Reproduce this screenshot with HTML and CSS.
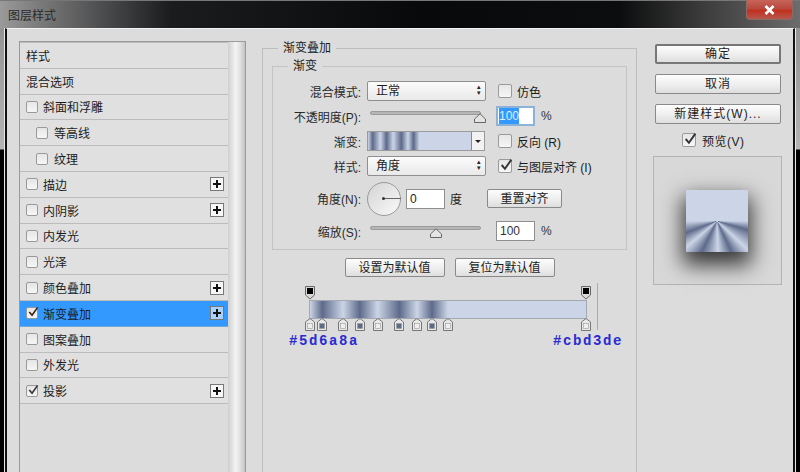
FILE: index.html
```html
<!DOCTYPE html>
<html lang="zh-CN">
<head>
    <meta charset="UTF-8">
    <title>图层样式</title>
    <link rel="stylesheet" href="styles.css">
</head>
<body>
    <svg class="defs" width="0" height="0">
        <symbol id="tick" viewBox="0 0 13 13"><path d="M2.5 6.5 5.5 10 11.5 1.5" fill="none" stroke="currentColor" stroke-width="1.8"/></symbol>
        <symbol id="thumb" viewBox="0 0 12 10"><path d="M.5 9.5V6L6 .8 11.500 6v3.500z" fill="#e4e4e4" stroke="#666"/></symbol>
        <symbol id="stop-low" viewBox="0 0 10 13"><path d="M.5 12.500V4L5 .5 9.500 4v8.500z" fill="#e8e8e8" stroke="#777"/><rect x="2.500" y="5.500" width="5" height="5" fill="currentColor" stroke="#999" stroke-width=".6"/></symbol>
        <symbol id="stop-high" viewBox="0 0 10 14"><path d="M.5 .5h9V9L5 13 .5 9z" fill="#d8d8d8" stroke="#666"/><rect x="2" y="2" width="6" height="6" fill="#000"/></symbol>
    </svg>

    <div class="window">
        <div class="titlebar">
            <span class="title">图层样式</span>
            <button class="close" aria-label="关闭">
                <svg width="11" height="10" viewBox="0 0 11 10"><path d="M1.500 1 9.500 9M9.500 1 1.500 9" stroke="#fff" stroke-width="2.600"/></svg>
            </button>
        </div>

        <div class="dialog">
            <div class="styles">
                <ul class="style-list">
                    <li class="row strong">样式</li>
                    <li class="row">混合选项</li>
                    <li class="row"><span class="check"></span>斜面和浮雕</li>
                    <li class="row sub"><span class="check"></span>等高线</li>
                    <li class="row sub"><span class="check"></span>纹理</li>
                    <li class="row"><span class="check"></span>描边<span class="plus"></span></li>
                    <li class="row"><span class="check"></span>内阴影<span class="plus"></span></li>
                    <li class="row"><span class="check"></span>内发光</li>
                    <li class="row"><span class="check"></span>光泽</li>
                    <li class="row"><span class="check"></span>颜色叠加<span class="plus"></span></li>
                    <li class="row active"><span class="check"><svg class="tick tick-dark"><use href="#tick"/></svg></span>渐变叠加<span class="plus"></span></li>
                    <li class="row"><span class="check"></span>图案叠加</li>
                    <li class="row"><span class="check"></span>外发光</li>
                    <li class="row"><span class="check"><svg class="tick"><use href="#tick"/></svg></span>投影<span class="plus"></span></li>
                </ul>
                <div class="scrollbar"></div>
            </div>

            <fieldset class="panel">
                <legend>渐变叠加</legend>
                <fieldset class="group">
                    <legend>渐变</legend>
                    <div class="form">
                        <label>混合模式:</label>
                        <div class="select">正常</div>
                        <div class="option"><span class="check"></span>仿色</div>

                        <label>不透明度(P):</label>
                        <div class="slider"><svg class="slider-thumb thumb-end"><use href="#thumb"/></svg></div>
                        <div class="amount"><span class="field field-focus"><span class="selected">100</span></span>%</div>

                        <label>渐变:</label>
                        <div class="gradient-pick"><div class="gradient-thumb"></div><div class="gradient-arrow"></div></div>
                        <div class="option"><span class="check"></span>反向 (R)</div>

                        <label>样式:</label>
                        <div class="select">角度</div>
                        <div class="option"><span class="check"><svg class="tick"><use href="#tick"/></svg></span>与图层对齐 (I)</div>

                        <label>角度(N):</label>
                        <div class="angle">
                            <div class="dial"><span class="dial-hand"></span></div>
                            <span class="field">0</span>
                            <span>度</span>
                            <button class="btn btn-align">重置对齐</button>
                        </div>

                        <label>缩放(S):</label>
                        <div class="slider"><svg class="slider-thumb thumb-mid"><use href="#thumb"/></svg></div>
                        <div class="amount"><span class="field">100</span>%</div>
                    </div>
                </fieldset>

                <div class="defaults">
                    <button class="btn btn-default">设置为默认值</button>
                    <button class="btn btn-default">复位为默认值</button>
                </div>

                <div class="editor">
                    <div class="ramp">
                        <svg class="stop-high" style="left:0"><use href="#stop-high"/></svg>
                        <svg class="stop-high" style="left:100%"><use href="#stop-high"/></svg>
                        <svg class="stop light" style="left:0"><use href="#stop-low"/></svg>
                        <svg class="stop dark" style="left:4.5%"><use href="#stop-low"/></svg>
                        <svg class="stop light" style="left:12%"><use href="#stop-low"/></svg>
                        <svg class="stop dark" style="left:18%"><use href="#stop-low"/></svg>
                        <svg class="stop light" style="left:24.500%"><use href="#stop-low"/></svg>
                        <svg class="stop dark" style="left:32.400%"><use href="#stop-low"/></svg>
                        <svg class="stop light" style="left:38.800%"><use href="#stop-low"/></svg>
                        <svg class="stop dark" style="left:44.200%"><use href="#stop-low"/></svg>
                        <svg class="stop light" style="left:50%"><use href="#stop-low"/></svg>
                        <svg class="stop light" style="left:100%"><use href="#stop-low"/></svg>
                    </div>
                    <div class="hex-row">
                        <span class="hex">#5d6a8a</span>
                        <span class="hex">#cbd3de</span>
                    </div>
                </div>
            </fieldset>

            <div class="actions">
                <button class="btn btn-action btn-primary">确定</button>
                <button class="btn btn-action">取消</button>
                <button class="btn btn-action">新建样式(W)...</button>
                <div class="preview-check"><span class="check check-big"><svg class="tick"><use href="#tick"/></svg></span>预览(V)</div>
                <div class="preview"><div class="swatch"></div></div>
            </div>
        </div>
    </div>
</body>
</html>
```

FILE: styles.css
```css
:root {
    --ramp: #ccd5e7 0%, #5d6a8a 4.5%, #ccd5e7 12%, #5d6a8a 18%, #ccd5e7 24.5%, #5d6a8a 32.4%, #ccd5e7 38.8%, #5d6a8a 44.2%, #ccd5e7 50%, #ccd5e7 100%;
}
* { box-sizing: border-box; }
html, body { margin: 0; padding: 0; }
body {
    font-family: "Liberation Sans", "Noto Sans CJK SC", sans-serif;
    font-size: 12px;
    color: #1c1c1c;
    width: 800px;
    height: 472px;
    overflow: hidden;
}
.defs { position: absolute; }
button { font: inherit; color: inherit; padding: 0; cursor: default; }

.window {
    width: 800px;
    height: 472px;
    display: flex;
    flex-direction: column;
    overflow: hidden;
    background: linear-gradient(#8c8c8c 0, #b4b4b4 149px, #000 150px);
}
.titlebar {
    flex: none;
    height: 28px;
    display: flex;
    align-items: flex-start;
    justify-content: space-between;
    padding: 7px 7px 0 8px;
    background: linear-gradient(90deg, #9a9a9a 0, #7a7a7a 40px, #1a1c1e 170px, #08090a 420px, #0c0d0e 620px, #3a3a3a 700px, #6c6c6c 800px);
    border-top: 1px solid #777;
}
.title { color: #2a2a2a; line-height: 16px; }
.close {
    margin-top: -8px;
    width: 47px;
    height: 20px;
    border: 1px solid #8d6a66;
    border-top: 0;
    border-radius: 0 0 4px 4px;
    background: linear-gradient(#c8645a 0, #b84a3e 45%, #c2301e 55%, #b4584e 100%);
    display: flex;
    align-items: center;
    justify-content: center;
}

.dialog {
    flex: 1;
    min-height: 0;
    margin: 0 5px;
    padding: 12px 0 0 12px;
    display: flex;
    align-items: flex-start;
    background: #dcdcdc;
    border-left: 2px solid #111;
    border-right: 2px solid #111;
    border-top: 1px solid #f2f2f2;
    box-shadow: -1px 0 0 #e8e8e8, 1px 0 0 #e8e8e8;
    overflow: hidden;
}

/* style list on the left */
.styles {
    flex: none;
    width: 227px;
    height: 440px;
    display: flex;
    border: 1px solid #9a9a9a;
    border-bottom: 0;
}
.style-list {
    list-style: none;
    margin: 0;
    padding: 0;
    flex: 1;
    border-top: 1px solid #bdbdbd;
}
.scrollbar {
    flex: none;
    width: 17px;
    background: linear-gradient(90deg, #cfcfcf, #f4f4f4 45%, #e2e2e2 70%, #c4c4c4);
}
.row {
    height: 25.8px;
    display: flex;
    align-items: center;
    padding: 0 4px 0 6px;
    border-bottom: 1px solid #bcbcbc;
    background: #e0e0e0;
}
.row .check { margin-right: 5px; }
.row.sub { padding-left: 16px; }
.row.sub .check { margin-right: 6px; }
.row.active { background: #3399ff; border-bottom-color: #6fa9dc; }
.check {
    flex: none;
    width: 12px;
    height: 12px;
    border: 1px solid #9a9a9a;
    border-radius: 2px;
    background: linear-gradient(#e6e6e6, #f6f6f6);
    position: relative;
}
.tick {
    position: absolute;
    left: 0;
    top: -2px;
    width: 12px;
    height: 12px;
    color: #333;
}
.tick-dark { color: #3a2410; }
.plus {
    width: 14px;
    height: 14px;
    margin-left: auto;
    border: 1px solid #777;
    background:
        linear-gradient(#111, #111) center / 8px 2px no-repeat,
        linear-gradient(#111, #111) center / 2px 8px no-repeat,
        #f6f6f6;
}
.active .plus { background-color: #a8d0f8; }

/* middle panel */
fieldset { margin: 0; min-width: 0; }
.panel {
    flex: none;
    width: 375px;
    height: 470px;
    margin: 0 0 0 16px;
    padding: 0 9px;
    border: 1px solid #bdbdbd;
}
.panel > legend { margin-left: 6px; padding: 0 5px; line-height: 14px; }
.group {
    height: 191px;
    margin-top: 4px;
    padding: 8px 0 0;
    border: 1px solid #c4c4c4;
}
.group > legend { margin-left: 15px; padding: 0 5px; line-height: 14px; }
.form {
    display: grid;
    grid-template-columns: 88px 119px 1fr;
    grid-template-rows: 20px 20px 20px 20px 35px 20px;
    column-gap: 6px;
    row-gap: 5px;
    align-items: center;
}
.form > label { text-align: right; color: #2a2a2a; }
.form > .amount, .form > .option { margin-left: 4px; }
.select {
    height: 20px;
    padding-left: 8px;
    line-height: 18px;
    border: 1px solid #8f8f8f;
    border-radius: 2px;
    background: linear-gradient(#fbfbfb, #e9e9e9);
    position: relative;
}
.select::after {
    content: "\25B4\A\25BE";
    white-space: pre;
    position: absolute;
    right: 4px;
    top: 2px;
    font-size: 7px;
    line-height: 6px;
    color: #222;
}
.option { display: flex; align-items: center; gap: 5px; }
.option .check { width: 14px; height: 14px; margin-left: 2px; }
.option .tick { width: 14px; height: 14px; }
.slider {
    height: 4px;
    margin: 0 5px 6px 3px;
    border-radius: 2px;
    border: 1px solid #9b9b9b;
    background: #b6b6b6;
    position: relative;
}
.slider-thumb { position: absolute; top: 1px; width: 12px; height: 10px; margin-left: -6px; }
.thumb-end { left: 100%; }
.thumb-mid { left: 60%; }
.amount { display: flex; align-items: center; gap: 6px; color: #333; }
.field {
    display: block;
    width: 39px;
    height: 20px;
    padding-left: 3px;
    line-height: 18px;
    background: #fff;
    border: 1px solid #8f8f8f;
}
.field-focus { border: 2px solid #8db2d8; padding-left: 1px; line-height: 16px; }
.selected { background: #3399ff; color: #dfefff; display: inline-block; }
.gradient-pick {
    height: 20px;
    display: flex;
    border: 1px solid #9a9a9a;
    margin-right: 1px;
}
.gradient-thumb { flex: 1; background: linear-gradient(90deg, var(--ramp)); }
.gradient-arrow {
    flex: none;
    width: 13px;
    border-left: 1px solid #888;
    background: #f2f2f2;
    display: flex;
    align-items: center;
    justify-content: center;
}
.gradient-arrow::after {
    content: "";
    border: 3px solid transparent;
    border-top-color: #222;
    border-bottom: 0;
}
.angle { grid-column: span 2; display: flex; align-items: center; gap: 5px; }
.dial {
    flex: none;
    width: 34px;
    height: 34px;
    border-radius: 50%;
    border: 1px solid #9a9a9a;
    background: linear-gradient(135deg, #d4d4d4, #fafafa);
    position: relative;
}
.dial-hand {
    position: absolute;
    left: 14px;
    top: 15px;
    width: 19px;
    height: 1px;
    background: #666;
}
.dial-hand::before {
    content: "";
    position: absolute;
    left: 0;
    top: -1px;
    width: 3px;
    height: 3px;
    background: #333;
    border-radius: 50%;
}
.btn {
    border: 1px solid #8a8a8a;
    border-radius: 2px;
    background: linear-gradient(#fdfdfd, #ececec 60%, #dedede);
    text-align: center;
}
.btn-align { width: 75px; height: 19px; margin-left: 20px; line-height: 16px; }
.defaults {
    display: flex;
    justify-content: center;
    gap: 10px;
    margin-top: 8px;
}
.btn-default { width: 100px; height: 19px; line-height: 16px; }

/* gradient editor */
.editor {
    width: 313px;
    margin: 6px 0 0 13px;
    height: 47px;
    padding: 17px 0 0 24px;
    border-right: 1px solid #aaa;
    position: relative;
}
.ramp {
    width: 278px;
    height: 19px;
    border: 1px solid #a4a8b0;
    background: linear-gradient(90deg, var(--ramp));
    position: relative;
}
.stop-high { position: absolute; top: -15px; width: 10px; height: 14px; margin-left: -5px; }
.stop { position: absolute; top: 17px; width: 10px; height: 13px; margin-left: -5px; }
.stop.light { color: #eee; }
.stop.dark { color: #5d6a8a; }
.hex-row {
    width: 334px;
    margin: 14px 0 0 -20px;
    display: flex;
    justify-content: space-between;
}
.hex {
    font: bold 14px/16px "Liberation Mono", monospace;
    letter-spacing: 1.6px;
    color: #2b2bd0;
}

/* right column */
.actions {
    flex: none;
    width: 126px;
    margin-left: 18px;
    margin-top: 3px;
    display: flex;
    flex-direction: column;
    align-items: stretch;
}
.btn-action { height: 20px; margin-bottom: 10px; line-height: 17px; letter-spacing: 1px; }
.btn-primary { border: 2px solid #777; }
.preview-check {
    display: flex;
    align-items: center;
    gap: 6px;
    margin-top: -4px;
    padding-left: 27px;
    height: 20px;
    letter-spacing: .5px;
}
.check-big { width: 14px; height: 14px; }
.check-big .tick { width: 14px; height: 14px; }
.preview {
    height: 129px;
    margin: 6px -1px 0 -2px;
    padding: 33px 1px 0 0;
    border: 1px solid #b4b4b4;
    background: #d8d8d8;
    display: flex;
    justify-content: center;
    align-items: flex-start;
}
.swatch {
    width: 62px;
    height: 62px;
    background: conic-gradient(from 90deg at 50% 50%, var(--ramp));
    box-shadow: 0 10px 20px 3px rgba(0, 0, 0, .75);
}
```
